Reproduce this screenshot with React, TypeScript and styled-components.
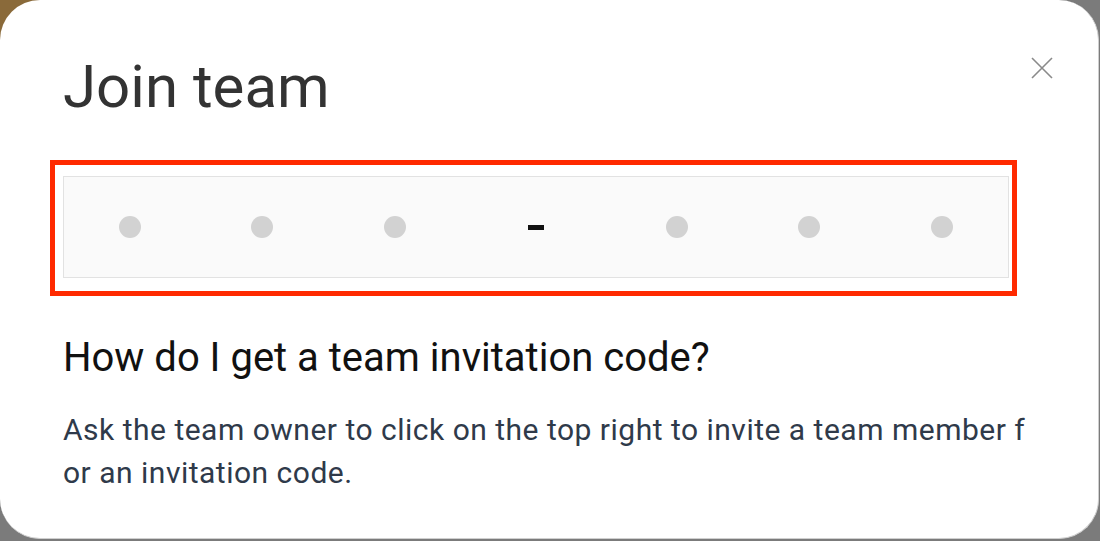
import React from 'react'
import styled, { createGlobalStyle } from 'styled-components'

const GlobalStyle = createGlobalStyle`
  html, body {
    margin: 0;
    padding: 0;
    background: #7b7b7b;
    font-family: Roboto, "Noto Sans", "Liberation Sans", sans-serif;
  }
  * {
    box-sizing: border-box;
  }
`

const Page = styled.div`
  width: 1100px;
  height: 541px;
  background: linear-gradient(135deg, #8a6a3a 0, #8a6a3a 3%, #7b7b7b 6%);
`

const Modal = styled.div`
  position: relative;
  width: 1099px;
  height: 539px;
  background: #fff;
  border: 1px solid #cfcfcf;
  border-top: none;
  border-left: none;
  border-radius: 40px;
  padding: 48px 0 0 63px;
`

const Title = styled.h1`
  margin: 0;
  font-size: 60px;
  font-weight: 400;
  line-height: 78px;
  color: #333;
`

const CloseButton = styled.button`
  position: absolute;
  top: 56px;
  right: 44px;
  width: 24px;
  height: 24px;
  padding: 0;
  border: none;
  background: transparent;
  display: flex;
  align-items: center;
  justify-content: center;
`

const CodeArea = styled.div`
  position: relative;
  margin-top: 50px;
  width: 946px;
`

const Highlight = styled.div`
  position: absolute;
  top: -16px;
  left: -13px;
  right: -8px;
  bottom: -18px;
  border: 5px solid #ff2a00;
  pointer-events: none;
`

const CodeInput = styled.div`
  display: grid;
  grid-template-columns: repeat(3, 1fr) 150px repeat(3, 1fr);
  align-items: center;
  height: 102px;
  background: #fafafa;
  border: 1px solid #e2e2e2;
`

const Slot = styled.div`
  display: flex;
  justify-content: center;
  align-items: center;
`

const Dot = styled.span`
  width: 22px;
  height: 22px;
  border-radius: 50%;
  background: #d2d2d2;
`

const Dash = styled.span`
  width: 16px;
  height: 5px;
  background: #111;
`

const Question = styled.h2`
  margin: 56px 0 0;
  font-size: 40px;
  font-weight: 400;
  line-height: 48px;
  color: #111;
`

const Answer = styled.p`
  margin: 26px 0 0;
  width: 972px;
  font-size: 30px;
  letter-spacing: 0.5px;
  line-height: 43px;
  color: #2f3a4a;
  word-break: break-all;
`

export default function App() {
  const slots = ['dot', 'dot', 'dot', 'dash', 'dot', 'dot', 'dot']
  return (
    <>
      <GlobalStyle />
      <Page>
        <Modal>
          <Title>Join team</Title>
          <CloseButton aria-label="Close">
            <svg width="22" height="22" viewBox="0 0 22 22">
              <path d="M1 1 L21 21 M21 1 L1 21" stroke="#8a8a8a" strokeWidth="1.6" />
            </svg>
          </CloseButton>
          <CodeArea>
            <CodeInput>
              {slots.map((s, i) => (
                <Slot key={i}>{s === 'dot' ? <Dot /> : <Dash />}</Slot>
              ))}
            </CodeInput>
            <Highlight />
          </CodeArea>
          <Question>How do I get a team invitation code?</Question>
          <Answer>
            Ask the team owner to click on the top right to invite a team member for an invitation code.
          </Answer>
        </Modal>
      </Page>
    </>
  )
}
